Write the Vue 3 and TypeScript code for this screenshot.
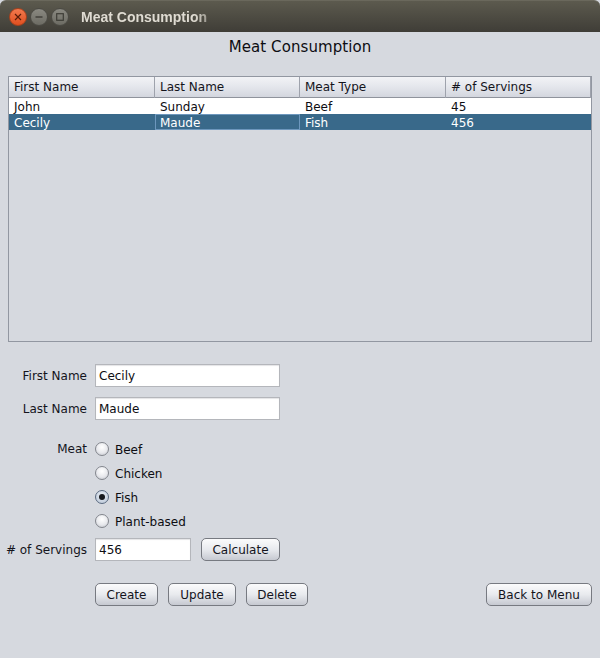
<script setup lang="ts">
interface Row { first: string; last: string; meat: string; servings: string; selected: boolean }
const columns: string[] = ['First Name', 'Last Name', 'Meat Type', '# of Servings']
const rows: Row[] = [
  { first: 'John', last: 'Sunday', meat: 'Beef', servings: '45', selected: false },
  { first: 'Cecily', last: 'Maude', meat: 'Fish', servings: '456', selected: true },
]
const meats: string[] = ['Beef', 'Chicken', 'Fish', 'Plant-based']
</script>

<template>
  <div class="window">
    <header class="titlebar">
      <div class="controls">
        <span class="ctl close">
          <svg width="8" height="8" viewBox="0 0 8 8"><path d="M1 1L7 7M7 1L1 7" stroke="#5a1c08" stroke-width="1.2" fill="none" /></svg>
        </span>
        <span class="ctl">
          <svg width="8" height="8" viewBox="0 0 8 8"><path d="M0.5 4H7.5" stroke="#3e3d37" stroke-width="1.4" fill="none" /></svg>
        </span>
        <span class="ctl">
          <svg width="8" height="8" viewBox="0 0 8 8"><rect x="0.7" y="0.7" width="6.6" height="6.6" stroke="#3e3d37" stroke-width="1.2" fill="none" /></svg>
        </span>
      </div>
      <span class="wintitle">Meat Consumption</span>
    </header>

    <h1 class="heading">Meat Consumption</h1>

    <section class="table">
      <div class="thead">
        <div v-for="c in columns" :key="c" class="th">{{ c }}</div>
      </div>
      <div v-for="r in rows" :key="r.first" class="tr" :class="{ selected: r.selected }">
        <div class="td">{{ r.first }}</div>
        <div class="td" :class="{ focus: r.selected }">{{ r.last }}</div>
        <div class="td">{{ r.meat }}</div>
        <div class="td">{{ r.servings }}</div>
      </div>
    </section>

    <form class="form" @submit.prevent>
      <div class="row name-first">
        <label class="lbl">First Name</label>
        <div class="input wide">Cecily</div>
      </div>
      <div class="row name-last">
        <label class="lbl">Last Name</label>
        <div class="input wide">Maude</div>
      </div>
      <div class="meat-block">
        <div class="lbl meat-lbl">Meat</div>
        <div class="radios">
          <div v-for="m in meats" :key="m" class="radio-row">
            <span class="radio" :class="{ on: m === 'Fish' }"></span>
            <span class="radio-text">{{ m }}</span>
          </div>
        </div>
      </div>
      <div class="row servings">
        <label class="lbl">
          # of Servings
        </label>
        <div class="input narrow">456</div>
        <button type="button" class="btn calc">Calculate</button>
      </div>
      <div class="actions">
        <button type="button" class="btn create">Create</button>
        <button type="button" class="btn update">Update</button>
        <button type="button" class="btn delete">Delete</button>
        <button type="button" class="btn back">Back to Menu</button>
      </div>
    </form>
  </div>
</template>

<style>
html, body { margin: 0; background: #d6d9e1; }
</style>

<style scoped>
.window {
  width: 600px;
  height: 658px;
  background: #d6d9df;
  font-family: "DejaVu Sans", sans-serif;
  font-size: 12px;
  color: #0d0d12;
  overflow: hidden;
  box-sizing: border-box;
}
.titlebar {
  height: 32px;
  display: flex;
  align-items: center;
  background: linear-gradient(#5c5a4e, #3f3d37);
  border-radius: 6px 6px 0 0;
  border-top: 1px solid #6a685c;
  box-sizing: border-box;
}
.controls { display: flex; gap: 3px; margin-left: 9px; }
.ctl {
  width: 18px;
  height: 18px;
  border-radius: 50%;
  background: linear-gradient(#8a8981, #6c6b63);
  border: 1px solid #4b4a44;
  box-sizing: border-box;
  display: flex;
  align-items: center;
  justify-content: center;
}
.close { background: linear-gradient(#f27a4e, #e04f20); border-color: #a9411c; }
.wintitle {
  margin-left: 12px;
  font-family: "Liberation Sans", "Noto Sans", sans-serif;
  font-weight: 700;
  font-size: 14px;
  color: #dfdbd2;
  white-space: nowrap;
  -webkit-mask-image: linear-gradient(to right, #000 90%, rgba(0, 0, 0, 0.55));
  mask-image: linear-gradient(to right, #000 90%, rgba(0, 0, 0, 0.55));
}
.heading {
  margin: 0;
  height: 44px;
  padding-top: 6px;
  box-sizing: border-box;
  text-align: center;
  font-size: 15px;
  letter-spacing: 0.08px;
  font-weight: 400;
  line-height: 18px;
}
.table {
  margin-left: 8px;
  width: 584px;
  height: 266px;
  border: 1px solid #9297a1;
  box-sizing: border-box;
}
.thead {
  display: grid;
  grid-template-columns: 146px 145px 146px 1fr;
  height: 21px;
  border-bottom: 1px solid #8f939c;
  background: linear-gradient(#f2f3f6, #e4e6ec 50%, #d3d6de);
  box-sizing: border-box;
}
.th {
  padding-left: 5px;
  line-height: 21px;
  border-right: 1px solid #9ea2ac;
  color: #14141c;
}
.tr {
  display: grid;
  grid-template-columns: 146px 145px 146px 1fr;
  grid-template-rows: 16px;
  height: 16px;
  background: #fff;
}
.tr:first-of-type { height: 17px; grid-template-rows: 17px; }
.td { padding-left: 5px; line-height: 18px; height: 100%; box-sizing: border-box; }
.selected { background: #39698a; color: #fff; }
.td.focus { border: 1px solid #6d97bd; line-height: 16px; padding-left: 4px; height: 16px; }
.form { position: relative; }
.lbl {
  width: 87px;
  text-align: right;
  flex: none;
  color: #14141c;
}
.row { display: flex; align-items: center; gap: 8px; }
.name-first { margin-top: 22px; height: 23px; }
.name-last { margin-top: 10px; height: 23px; }
.input {
  height: 23px;
  line-height: 22px;
  background: #fff;
  border: 1px solid #b4b6bb;
  padding-left: 3px;
  box-sizing: border-box;
  box-shadow: inset 0 1px 1px #e4e4e6;
}
.wide { width: 185px; }
.narrow { width: 96px; }
.meat-block { display: flex; gap: 8px; margin-top: 17px; }
.meat-lbl { line-height: 24px; }
.radios { display: flex; flex-direction: column; }
.radio-row { display: flex; align-items: center; gap: 6px; height: 24px; }
.radio-text { padding-top: 2px; }
.radio {
  width: 14px;
  height: 14px;
  border-radius: 50%;
  border: 1px solid #83868d;
  background: radial-gradient(circle at 50% 35%, #fff, #e8e9ed 55%, #bfc2ca);
  box-sizing: border-box;
  position: relative;
}
.radio.on { background: radial-gradient(circle at 50% 35%, #e8edf4, #b8c5d6); border-color: #5b6a80; }
.radio.on::after {
  content: "";
  position: absolute;
  left: 3px;
  top: 3px;
  width: 6px;
  height: 6px;
  border-radius: 50%;
  background: #16181c;
}
.servings { margin-top: 5px; height: 23px; }
.btn {
  height: 23px;
  padding: 0;
  font: inherit;
  color: #14141c;
  border: 1px solid #777a81;
  border-radius: 5px;
  background: linear-gradient(#fbfbfc, #e8eaee 50%, #c6c9d1);
  box-sizing: border-box;
  line-height: 20px;
}
.calc { width: 79px; margin-left: 2px; }
.actions { display: flex; gap: 10px; margin-top: 22px; margin-left: 95px; width: 497px; }
.create { width: 63px; }
.update { width: 68px; }
.delete { width: 62px; }
.back { width: 106px; margin-left: auto; }
</style>
